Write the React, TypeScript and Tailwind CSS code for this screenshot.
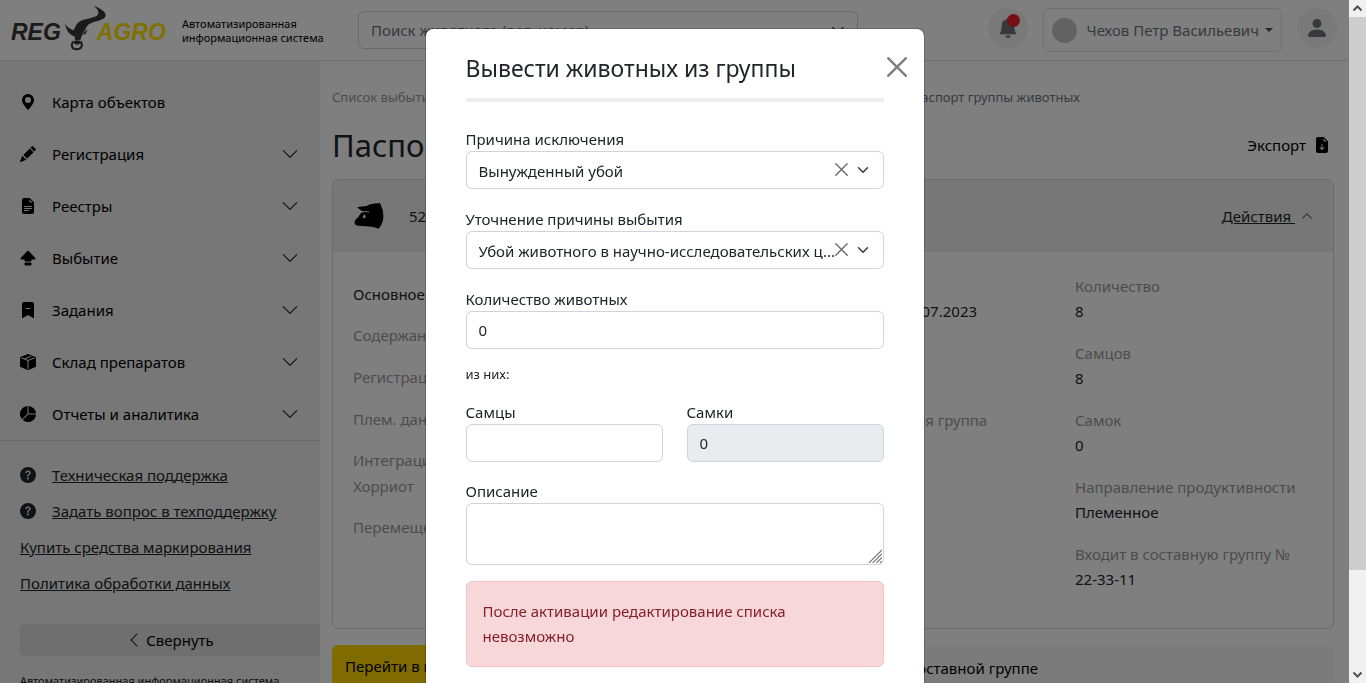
import type { ComponentType, ReactNode } from "react";
import {
  BsBellFill,
  BsBookmarkDashFill,
  BsBoxSeamFill,
  BsCapslockFill,
  BsChevronDown,
  BsChevronLeft,
  BsChevronUp,
  BsFileEarmarkArrowDownFill,
  BsFileEarmarkTextFill,
  BsGeoAltFill,
  BsPencilFill,
  BsPersonFill,
  BsPieChartFill,
  BsQuestionCircleFill,
} from "react-icons/bs";

type Icon = ComponentType<{ className?: string }>;

const nav: { label: string; icon: Icon; expandable: boolean }[] = [
  { label: "Карта объектов", icon: BsGeoAltFill, expandable: false },
  { label: "Регистрация", icon: BsPencilFill, expandable: true },
  { label: "Реестры", icon: BsFileEarmarkTextFill, expandable: true },
  { label: "Выбытие", icon: BsCapslockFill, expandable: true },
  { label: "Задания", icon: BsBookmarkDashFill, expandable: true },
  { label: "Склад препаратов", icon: BsBoxSeamFill, expandable: true },
  { label: "Отчеты и аналитика", icon: BsPieChartFill, expandable: true },
];

const facts: [string, string][] = [
  ["Количество", "8"],
  ["Самцов", "8"],
  ["Самок", "0"],
  ["Направление продуктивности", "Племенное"],
  ["Входит в составную группу №", "22-33-11"],
];

function Logo() {
  return (
    <a
      href="#"
      aria-label="REG AGRO"
      className="flex h-[60px] w-[156px] shrink-0 items-center font-['Liberation_Sans',sans-serif] text-[23px] font-bold italic leading-none"
    >
      <span className="mt-1 text-[#363636]">REG</span>
      <svg viewBox="0 0 130 145" className="-mr-2.5 mb-[5px] ml-[3px] h-[48px] w-[43px] shrink-0" fill="#363636" aria-hidden="true">
        <path d="M88 5C112 13 125 23 126 33C126 46 107 49 88 55C74 60 69 66 65 76C60 85 54 92 50 108C44 111 38 109 34 111C33 105 33 101 32 98C17 94 7 81 3 60C10 70 17 75 28 79C35 72 35 63 43 56C58 43 88 45 101 34C109 25 100 12 88 5Z" />
        <path d="M71 77C65 82 59 85 58 93C63 94 69 86 71 77Z" />
        <path
          d="M29 113C20 122 22 137 38 137C54 137 58 124 50 113"
          fill="none"
          stroke="#363636"
          strokeWidth="6"
        />
        <path d="M29 113C31 126 48 126 51 113L45 110L34 111Z" />
      </svg>
      <span className="mt-1 text-[#ffe100]">AGRO</span>
    </a>
  );
}

function PigIcon() {
  return (
    <svg viewBox="0 0 92 80" className="h-[26px] w-[31px] shrink-0" aria-hidden="true">
      <path d="M12 12L40 9Q55 0 82 1Q96 30 90 55Q86 70 77 79Q65 73 50 72L16 70Q4 70 3 60L5 52Q16 44 23 31L33 26Q20 24 12 12Z" />
      <path d="M24 28Q36 24 48 28" fill="none" stroke="#eeeeee" strokeWidth="3" />
      <path d="M28 44L33 34L38 42L32 48Z" fill="#eeeeee" />
    </svg>
  );
}

function Header() {
  return (
    <header className="flex h-[61px] items-start border-b border-[#dee2e6] bg-white pl-[11px] pr-3">
      <Logo />
      <p className="ml-[15px] mt-[17px] w-[176px] shrink-0 text-[11px] leading-[14px] text-black">
        Автоматизированная информационная система
      </p>
      <label className="mt-[11px] flex h-[38px] w-[500px] items-center rounded-md border border-[#ced4da] px-3">
        <input
          aria-label="Поиск животного"
          placeholder="Поиск животного (рег. номер)"
          className="min-w-0 flex-1 placeholder:text-[#6c757d]"
        />
        <BsChevronDown className="size-3.5" />
      </label>
      <div className="ml-auto mt-2 flex items-start">
        <button aria-label="Уведомления" className="relative flex size-10 items-center justify-center rounded-full bg-[#f2f2f2]">
          <BsBellFill className="size-5 text-[#6c757d]" />
          <span className="absolute right-2 top-1.5 size-[13px] rounded-full bg-[#ee2025]" />
        </button>
        <button className="ml-[15px] flex h-11 items-center rounded-md border border-[#dee2e6] px-2 text-[#6c757d]">
          <span className="mr-2.5 size-[25px] rounded-full bg-[#c4c4c4]" />
          <span>Чехов Петр Васильевич</span>
          <span className="ml-1.5 border-x-4 border-t-4 border-x-transparent border-t-[#555]" />
        </button>
        <button aria-label="Профиль" className="ml-[15px] flex size-10 items-center justify-center rounded-full bg-[#f2f2f2]">
          <BsPersonFill className="size-6 text-[#6c757d]" />
        </button>
      </div>
    </header>
  );
}

function Sidebar() {
  return (
    <aside className="w-[320px] shrink-0 bg-[#eeeeee] pt-[15px]">
      <nav className="border-b border-[#d8d8d8]">
        {nav.map(({ label, icon: NavIcon, expandable }) => (
          <a key={label} href="#" className="flex h-[52px] items-center pl-5 pr-[21px] text-black">
            <NavIcon className="size-4" />
            <span className="ml-4 flex-1">{label}</span>
            {expandable && <BsChevronDown className="size-[18px] text-[#212529]" />}
          </a>
        ))}
      </nav>
      <div className="flex flex-col pl-5 pt-4 leading-9 text-[#212529]">
        <a href="#" className="flex items-center gap-4">
          <BsQuestionCircleFill className="size-4" />
          <span className="underline">Техническая поддержка</span>
        </a>
        <a href="#" className="flex items-center gap-4">
          <BsQuestionCircleFill className="size-4" />
          <span className="underline">Задать вопрос в техподдержку</span>
        </a>
        <a href="#" className="underline">Купить средства маркирования</a>
        <a href="#" className="underline">Политика обработки данных</a>
        <button className="mt-[23px] flex h-8 items-center justify-center gap-1 rounded-sm bg-[#dedede] text-black">
          <BsChevronLeft className="size-4" />
          <span>Свернуть</span>
        </button>
        <p className="mt-4 text-[11px] leading-[18px]">Автоматизированная информационная система</p>
      </div>
    </aside>
  );
}

function Fact({ label, children }: { label: string; children?: ReactNode }) {
  return (
    <div className="h-[67px]">
      <dt className="h-[26px] leading-[26px] text-[#999999]">{label}</dt>
      <dd className="leading-[25px] text-[#212529]">{children}</dd>
    </div>
  );
}

function Passport() {
  return (
    <main className="min-w-0 flex-1 pl-3 pr-[15px] pt-[26px]">
      <div className="flex justify-between pr-[254px] text-[13px] leading-5">
        <a href="#" className="text-[#999999]">Список выбытий</a>
        <span className="text-[#6c757d]">Паспорт группы животных</span>
      </div>
      <div className="mt-[18px] flex h-10 items-center justify-between">
        <h1 className="text-[31px] leading-10 text-[#212529]">Паспорт группы</h1>
        <button className="mr-1 flex items-center gap-2 text-black">
          Экспорт
          <BsFileEarmarkArrowDownFill className="size-4" />
        </button>
      </div>
      <section className="mt-[14px] overflow-hidden rounded-md border border-[#d8d8d8]">
        <div className="flex h-[72px] items-center bg-[#eeeeee] px-5">
          <PigIcon />
          <span className="ml-[25px] text-[#212529]">522301</span>
          <button className="ml-auto flex items-center gap-1.5 text-[#212529]">
            <span className="whitespace-pre underline">Действия </span>
            <BsChevronUp className="size-3" />
          </button>
        </div>
        <div className="flex h-[376px] px-5 pt-[21px]">
          <div className="w-[120px] leading-[26px] text-[#999999]">
            <p className="mt-2 text-[#212529]">Основное</p>
            <p className="mt-[15px]">Содержание</p>
            <p className="mt-4">Регистрация</p>
            <p className="mt-4">Плем. данные</p>
            <p className="mt-[15px]">Интеграция с Хорриот</p>
            <p className="mt-[15px]">Перемещения</p>
          </div>
          <dl className="ml-auto w-[217px]">
            <Fact label="Основан">Дата: 07.07.2023</Fact>
            <Fact label="" />
            <Fact label="Составная группа" />
          </dl>
          <dl className="w-[238px]">
            {facts.map(([label, value]) => (
              <Fact key={label} label={label}>{value}</Fact>
            ))}
          </dl>
        </div>
      </section>
      <div className="mt-4 flex text-black">
        <button className="h-[42px] w-[200px] shrink-0 rounded-l-md bg-[#ffd700] px-[13px] text-left">Перейти в группу</button>
        <div className="flex h-[46px] flex-1 items-center justify-end rounded-md bg-[#f7f7f7] pr-[296px]">
          Операции в составной группе
        </div>
      </div>
    </main>
  );
}

const labelText = "block h-[26px] leading-7";
const field = "block h-[38px] w-full rounded-md border border-[#ced4da] px-3";

function SelectField({ id, label, value }: { id: string; label: string; value: string }) {
  return (
    <div>
      <label htmlFor={id} className={labelText}>{label}</label>
      <div className="relative">
        <select id={id} className="block h-[38px] w-full appearance-none rounded-md border border-[#ced4da] bg-white pl-3 pr-8 pt-0.5">
          <option>{value}</option>
        </select>
        <button aria-label="Очистить" className="absolute right-9 top-3">
          <svg viewBox="0 0 13 13" className="size-[13px]" stroke="#6b6b6b" strokeWidth="1.4" strokeLinecap="round">
            <path d="M.8.8l11.4 11.4M12.2.8L.8 12.2" />
          </svg>
        </button>
        <svg viewBox="0 0 16 16" className="pointer-events-none absolute right-[15px] top-[13px] size-3" fill="none" stroke="#343a40" strokeWidth="2" strokeLinecap="round" strokeLinejoin="round">
          <path d="M2 5l6 6 6-6" />
        </svg>
      </div>
    </div>
  );
}

function RemovalDialog() {
  return (
    <div
      role="dialog"
      aria-labelledby="dialog-title"
      className="relative mx-auto mt-7 w-[500px] rounded-lg border border-black/20 bg-white bg-clip-padding px-10 pb-10 pt-5 text-[#212529]"
    >
      <button aria-label="Закрыть" className="absolute right-[17px] top-7">
        <svg viewBox="0 0 20 20" className="size-5" stroke="#808080" strokeWidth="2.6" strokeLinecap="round">
          <path d="M1.3 1.3l17.4 17.4M18.7 1.3L1.3 18.7" />
        </svg>
      </button>
      <h2 id="dialog-title" className="h-[53px] border-b-4 border-[#eeeeee] text-[23px] leading-[38px]">
        Вывести животных из группы
      </h2>
      <form className="mt-[23px]">
        <div className="flex flex-col gap-4">
          <SelectField id="reason" label="Причина исключения" value="Вынужденный убой" />
          <SelectField
            id="detail"
            label="Уточнение причины выбытия"
            value="Убой животного в научно-исследовательских ц..."
          />
          <div>
            <label htmlFor="count" className={labelText}>Количество животных</label>
            <input id="count" defaultValue="0" className={field} />
          </div>
        </div>
        <p className="mt-[15px] text-[13px] leading-5">из них:</p>
        <div className="mt-[14px] grid grid-cols-2 gap-6">
          <div>
            <label htmlFor="males" className={labelText}>Самцы</label>
            <input id="males" className={field} />
          </div>
          <div>
            <label htmlFor="females" className={labelText}>Самки</label>
            <input id="females" defaultValue="0" readOnly className={field + " bg-[#e9ecef]"} />
          </div>
        </div>
        <label htmlFor="note" className={"mt-[15px] " + labelText}>Описание</label>
        <div className="relative">
          <textarea id="note" className="block h-[62px] w-full resize-none rounded-md border border-[#ced4da] px-3 py-1.5" />
          <svg viewBox="0 0 15 15" className="pointer-events-none absolute bottom-0.5 right-0.5 size-[14px]" stroke="#777" strokeWidth="1.2">
            <path d="M1 15L15 1M5 15L15 5M9 15l6-6M13 15l2-2" />
          </svg>
        </div>
        <p className="mt-4 rounded-md border border-[#f5c2c7] bg-[#f8d7da] px-4 py-[17px] leading-[25px] text-[#842029]">
          После активации редактирование списка невозможно
        </p>
      </form>
    </div>
  );
}

function Scrollbar() {
  return (
    <div aria-hidden="true" className="flex w-[17px] shrink-0 flex-col items-center bg-[#f1f1f1] text-[#505050]">
      <svg viewBox="0 0 17 17" className="size-[17px] shrink-0" fill="none" stroke="currentColor" strokeWidth="2">
        <path d="M4.5 10.5l4-4 4 4" />
      </svg>
      <div className="w-full basis-[553px] bg-[#cdcdcd]" />
      <svg viewBox="0 0 17 17" className="mt-auto size-[17px] shrink-0" fill="none" stroke="currentColor" strokeWidth="2">
        <path d="M4.5 6.5l4 4 4-4" />
      </svg>
    </div>
  );
}

export default function App() {
  return (
    <div className="h-screen overflow-hidden bg-white font-['Noto_Sans',sans-serif] text-[15px]">
      <div className="flex h-full flex-col pr-[17px]">
        <Header />
        <div className="flex min-h-0 flex-1">
          <Sidebar />
          <Passport />
        </div>
      </div>
      <div className="fixed inset-0 flex">
        <div className="min-w-0 flex-1 overflow-hidden bg-black/50">
          <RemovalDialog />
        </div>
        <Scrollbar />
      </div>
    </div>
  );
}
